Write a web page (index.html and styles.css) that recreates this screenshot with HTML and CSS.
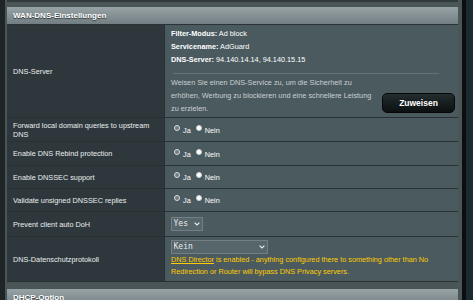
FILE: index.html
```html
<!DOCTYPE html>
<html lang="de">
<head>
<meta charset="utf-8">
<title>WAN-DNS-Einstellungen</title>
<link rel="stylesheet" href="styles.css">
</head>
<body>
<div class="page">
  <div class="edge-left"></div>
  <div class="panel">
    <div class="prev-end"></div>
    <section class="section">
      <div class="section-head">WAN-DNS-Einstellungen</div>
      <div class="row">
        <div class="label">DNS-Server</div>
        <div class="value value-dns">
          <div class="dns-info">
            <div><b>Filter-Modus:</b> Ad block</div>
            <div><b>Servicename:</b> AdGuard</div>
            <div><b>DNS-Server:</b> 94.140.14.14, 94.140.15.15</div>
          </div>
          <div class="sep"></div>
          <div class="assign">
            <p class="desc">Weisen Sie einen DNS-Service zu, um die Sicherheit zu<br>erhöhen, Werbung zu blockieren und eine schnellere Leistung<br>zu erzielen.</p>
            <button class="btn" type="button">Zuweisen</button>
          </div>
        </div>
      </div>
      <div class="row h24">
        <div class="label">Forward local domain queries to upstream DNS</div>
        <div class="value">
          <div class="radios">
            <label><input class="radio" type="radio" name="fwd" checked>Ja</label><label><input class="radio" type="radio" name="fwd">Nein</label>
          </div>
        </div>
      </div>
      <div class="row h24">
        <div class="label">Enable DNS Rebind protection</div>
        <div class="value">
          <div class="radios">
            <label><input class="radio" type="radio" name="rebind" checked>Ja</label><label><input class="radio" type="radio" name="rebind">Nein</label>
          </div>
        </div>
      </div>
      <div class="row h23">
        <div class="label">Enable DNSSEC support</div>
        <div class="value">
          <div class="radios">
            <label><input class="radio" type="radio" name="dnssec" checked>Ja</label><label><input class="radio" type="radio" name="dnssec">Nein</label>
          </div>
        </div>
      </div>
      <div class="row h23">
        <div class="label">Validate unsigned DNSSEC replies</div>
        <div class="value">
          <div class="radios">
            <label><input class="radio" type="radio" name="unsigned" checked>Ja</label><label><input class="radio" type="radio" name="unsigned">Nein</label>
          </div>
        </div>
      </div>
      <div class="row h25">
        <div class="label">Prevent client auto DoH</div>
        <div class="value">
          <span class="select-wrap">
            <select class="select select-small"><option>Yes</option><option>No</option></select>
            <svg class="chev" width="6" height="4" viewBox="0 0 6 4"><path d="M0.6 0.6 L3 3 L5.4 0.6" fill="none" stroke="#e8ecec" stroke-width="1.2"/></svg>
          </span>
        </div>
      </div>
      <div class="row h45">
        <div class="label">DNS-Datenschutzprotokoll</div>
        <div class="value value-block">
          <span class="select-wrap">
            <select class="select select-wide"><option>Kein</option></select>
            <svg class="chev" width="6" height="4" viewBox="0 0 6 4"><path d="M0.6 0.6 L3 3 L5.4 0.6" fill="none" stroke="#e8ecec" stroke-width="1.2"/></svg>
          </span>
          <div class="hint"><a href="#">DNS Director</a> is enabled - anything configured there to something other than No Redirection or Router will bypass DNS Privacy servers.</div>
        </div>
      </div>
    </section>
    <section class="section next">
      <div class="section-head">DHCP-Option</div>
    </section>
  </div>
  <div class="edge-black"></div>
  <div class="edge-teal"></div>
</div>
</body>
</html>
```

FILE: styles.css
```css
html, body {
  margin: 0;
  padding: 0;
}

body {
  background: #1f2427;
  font-family: "Liberation Sans", Arial, sans-serif;
  font-size: 7.3px;
  color: #ffffff;
  height: 300px;
  overflow: hidden;
}

.page {
  display: flex;
  height: 300px;
}

.edge-left {
  width: 5px;
  background: #1f2427;
}

.panel {
  width: 457px;
  box-sizing: border-box;
  padding: 0 4px 0 2px;
  background: #4a5558;
}

.edge-black {
  width: 4px;
  background: #0b0d0e;
}

.edge-teal {
  flex: 1;
  background: #1b2a30;
}

.prev-end {
  height: 2px;
  background: #31393c;
  margin-bottom: 5px;
}

.section-head {
  height: 17px;
  line-height: 17px;
  padding-left: 6px;
  font-size: 8px;
  font-weight: bold;
  color: #ffffff;
  text-shadow: 0 1px 1px #2a3134;
  background: linear-gradient(#98a3a6, #727e82);
  border-bottom: 1px solid #2b3336;
}

.row {
  display: grid;
  grid-template-columns: 158px 1fr;
  border-bottom: 1px solid #283033;
  box-sizing: border-box;
}

.h23 { height: 23px; }
.h24 { height: 24px; }
.h25 { height: 25px; }
.h45 { height: 45px; }

.label {
  background: #2e383c;
  border-right: 1px solid #283033;
  padding: 0 6px;
  display: flex;
  align-items: center;
  line-height: 9px;
  color: #eaedee;
}

.value {
  background: #4b5a5f;
  padding: 0 6px;
  display: flex;
  align-items: center;
}

.value-dns {
  display: block;
  padding: 2px 0 2px 6px;
}

.dns-info {
  line-height: 13px;
}

.dns-info b {
  font-weight: bold;
}

.sep {
  height: 1px;
  background: #647175;
  margin: 7px 19px 0 2px;
}

.assign {
  display: flex;
  justify-content: space-between;
  align-items: flex-end;
  margin-top: 2px;
}

.desc {
  margin: 0;
  line-height: 13px;
  color: #c9d0d2;
}

.btn {
  width: 73px;
  height: 20px;
  margin: 0 3px 2px 0;
  padding: 0;
  border: 1px solid #060808;
  border-radius: 5px;
  background: linear-gradient(#232c2f, #0c1011);
  color: #ffffff;
  font-family: "Liberation Sans", Arial, sans-serif;
  font-size: 8.5px;
  font-weight: bold;
}

.radios {
  line-height: 9px;
  color: #ffffff;
}

.radios label + label {
  margin-left: 2px;
}

.radio {
  -webkit-appearance: none;
  appearance: none;
  box-sizing: border-box;
  width: 6px;
  height: 6px;
  margin: 0 3px 2px 3px;
  border-radius: 50%;
  border: 1px solid #cfd3d4;
  background: #ffffff;
  vertical-align: baseline;
}

.radio:checked {
  border: 1.5px solid #dadddf;
  background: #737b7e;
}

.select-wrap {
  position: relative;
  display: inline-block;
}

.select {
  -webkit-appearance: none;
  appearance: none;
  display: block;
  box-sizing: border-box;
  height: 14px;
  margin: 0;
  padding: 0 0 0 1.5px;
  border: 1px solid #728085;
  border-radius: 0;
  background: #56666b;
  color: #ececec;
  font-family: "DejaVu Sans Mono", monospace;
  font-size: 8px;
  line-height: 12px;
}

.select-small {
  width: 32px;
}

.select-wide {
  width: 97px;
}

.chev {
  position: absolute;
  right: 3px;
  top: 5px;
}

.value-block {
  display: block;
  padding-top: 2.5px;
}

.hint {
  color: #ffcc00;
  line-height: 12.7px;
}

.hint a {
  color: #ffcc00;
  text-decoration: underline;
}

.next {
  margin-top: 7px;
}
```
